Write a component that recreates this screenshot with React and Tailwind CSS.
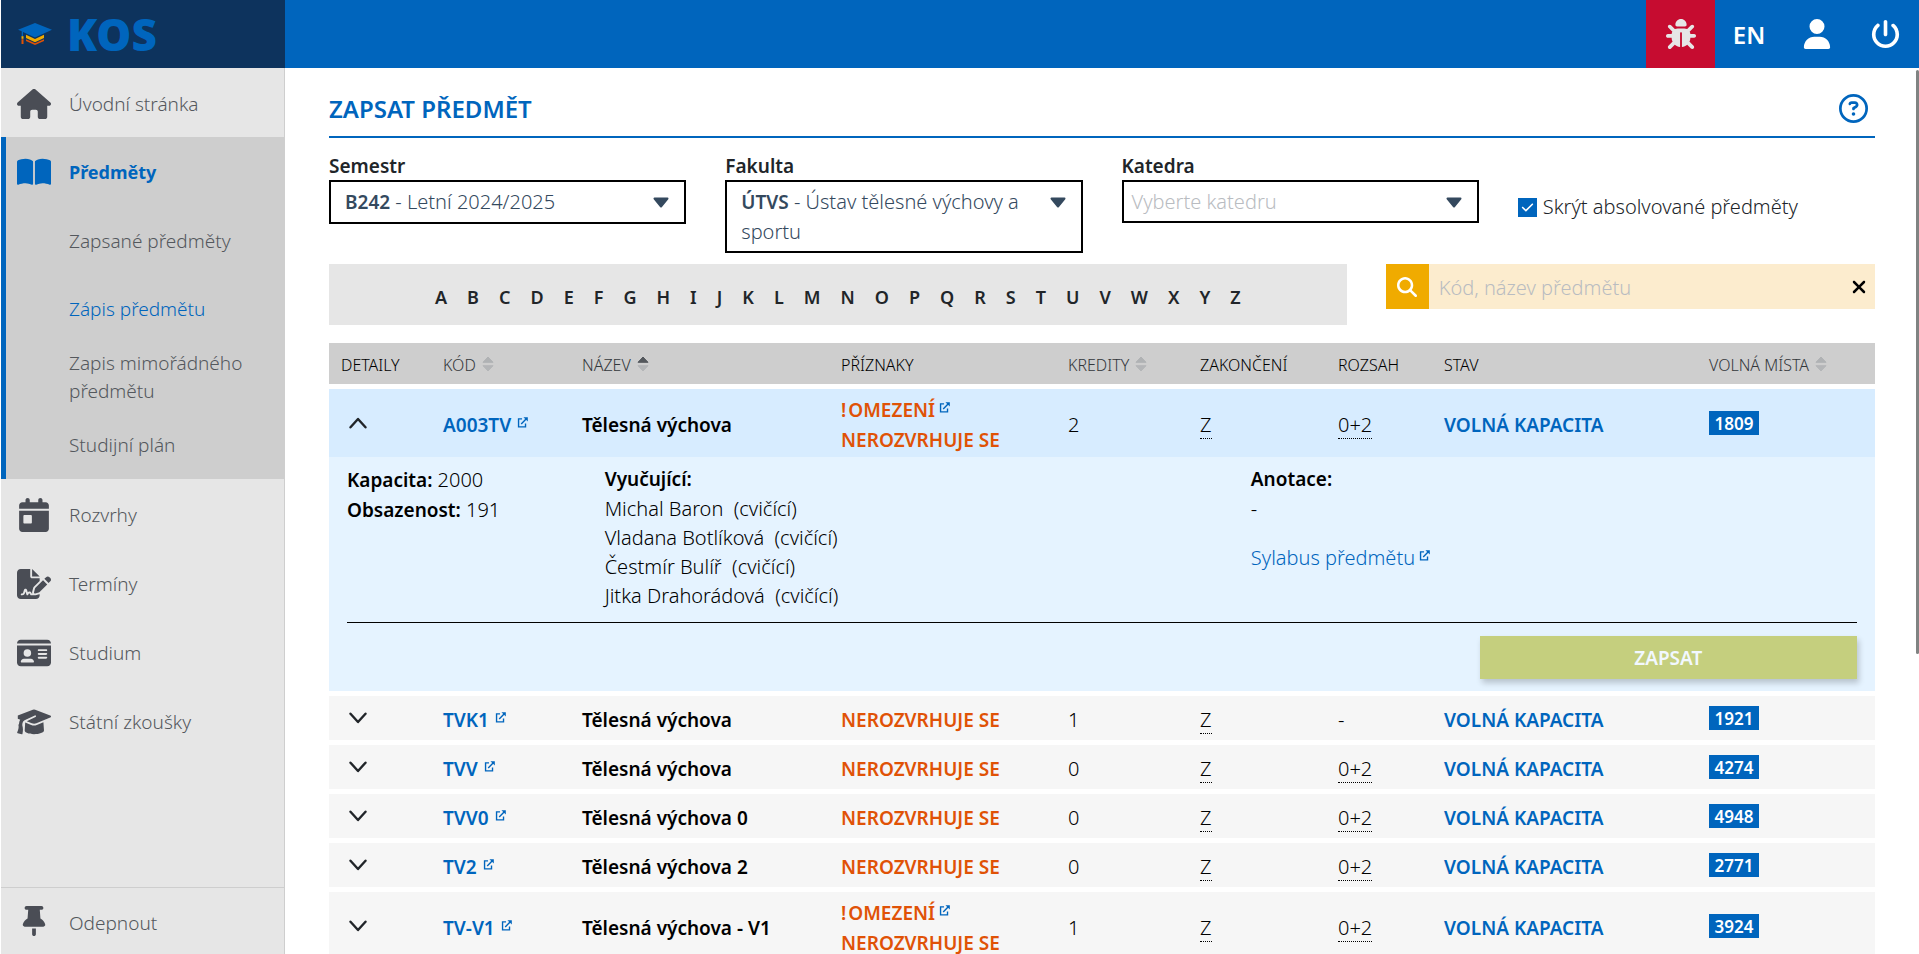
import { Fragment, useState } from "react";
import {
  FaHouse,
  FaBookOpen,
  FaCalendarDay,
  FaFileSignature,
  FaIdCard,
  FaThumbtack,
  FaBug,
  FaUser,
  FaPowerOff,
  FaRegCircleQuestion,
  FaXmark,
  FaMagnifyingGlass,
  FaCheck,
} from "react-icons/fa6";

function GraduationIcon({ className }) {
  return (
    <svg viewBox="0 0 34 25" className={className} aria-hidden="true">
      <path
        d="M15.8.3a3.6 3.6 0 0 1 2.4 0L33.2 6c1.1.4 1.1 1.7 0 2.1l-13.8 5.6a6 6 0 0 1-4.6 0l-5-2 8.700-4.300a.8.8 0 1 0-.7-1.500L7.600 10.700a4 4 0 0 0-2 2.500c-.3 1-.4 2-.2 3 .7 2 .7 5 .1 8 0 .4-.4.7-.8.6L.700 23.700c-.4-.1-.6-.5-.5-.9.9-1.900 1.600-4.300 1.400-6.300a1.900 1.900 0 0 1 .4-2c.2-1.700.5-3.200 1.300-4.200L.800 9.200V6z"
        fill="currentColor"
      />
      <path
        d="M8.200 12.900l6 2.500a7 7 0 0 0 5.600 0l6.600-2.700.6 8.300c0 1.900-4.600 3.700-10 3.700s-9.300-1.800-9.300-3.700z"
        fill="currentColor"
      />
    </svg>
  );
}

function LogoIcon({ className }) {
  return (
    <svg viewBox="0 0 34 22" className={className} aria-hidden="true">
      <path d="M17 0 34 6.700 17 14.500 5 9v4.500H3.700V8.300L0 6.700z" fill="#0065bd" />
      <path d="M8 11.800v3.300l9 4.200 9-4.200v-3.300l-9 4.200z" fill="#f0ab00" />
      <path d="M8 16.200v1.900l9 3.900 9-3.900v-1.900l-9 4.100z" fill="#e05206" />
      <path d="M3.500 13.200h2v2.600h-2z" fill="#f0ab00" />
      <path d="M3.500 16.200h2V21h-2z" fill="#e05206" />
    </svg>
  );
}

function ExternalIcon({ gap = "ml-1" }) {
  return (
    <svg viewBox="0 0 12 12" className={"inline-block size-[11px] -translate-y-1 align-baseline text-[#0065bd] " + gap} fill="none" stroke="currentColor" strokeWidth="1.500" aria-hidden="true">
      <path d="M5.500 2H1.700v8.800h7.600V7M4.600 7.700 10.400 1.600" />
      <path d="M7 .2h4.800v4.700z" fill="currentColor" stroke="none" />
    </svg>
  );
}

function SortIcon({ up }) {
  return (
    <svg viewBox="0 0 12 16" className="ml-1.5 inline-block h-4 w-3 -translate-y-0.5" aria-hidden="true">
      <path d="M6 1 11 6.300H1z" fill={up ? "#54585d" : "#b0b2b4"} stroke={up ? "#54585d" : "#b0b2b4"} strokeLinejoin="round" />
      <path d="M6 15 1 9.700h10z" fill="#b4b6b8" stroke="#b4b6b8" strokeLinejoin="round" />
    </svg>
  );
}

function Chevron({ open }) {
  return (
    <svg viewBox="0 0 18 12" className="h-3 w-[18px]" fill="none" stroke="#212529" strokeWidth="2.400" strokeLinecap="round" strokeLinejoin="round" aria-hidden="true">
      <path d={open ? "M1.500 10.300 9 2l7.500 8.300" : "M1.500 1.700 9 10l7.500-8.300"} />
    </svg>
  );
}

const mainItem = "flex h-[69px] items-center gap-[18px] pt-0.5 pl-4 text-[19px]";
const subItem = "flex h-[68px] items-center pt-0.5 pl-[63px] pr-6 text-[19px] leading-7";

function NavItem({ icon: Icon, children }) {
  return (
    <a href="#" className={mainItem}>
      <span className="flex w-[34px] justify-center text-[#4a4d55]">
        <Icon className="size-[34px]" />
      </span>
      <span className="pt-0.5 text-[#54585d]">{children}</span>
    </a>
  );
}

function Sidebar() {
  return (
    <nav className="flex w-[284px] shrink-0 flex-col border-r border-[#cecece] bg-[#e6e6e6] font-light">
      <NavItem icon={FaHouse}>Úvodní stránka</NavItem>
      <div className="border-l-[5px] border-[#0065bd] bg-[#cecece] pb-px text-[#54585d]">
        <a href="#" className="flex h-[69px] items-center gap-[18px] pl-[11px] text-[18px] font-bold text-[#0065bd]">
          <FaBookOpen className="size-[34px]" />
          <span className="pt-0.5">Předměty</span>
        </a>
        <a href="#" className={subItem}>Zapsané předměty</a>
        <a href="#" className={subItem + " text-[#0065bd]"}>Zápis předmětu</a>
        <a href="#" className={subItem}>Zapis mimořádného předmětu</a>
        <a href="#" className={subItem}>Studijní plán</a>
      </div>
      <NavItem icon={FaCalendarDay}>Rozvrhy</NavItem>
      <NavItem icon={FaFileSignature}>Termíny</NavItem>
      <NavItem icon={FaIdCard}>Studium</NavItem>
      <NavItem icon={GraduationIcon}>Státní zkoušky</NavItem>
      <button type="button" className="mt-auto flex h-[67px] items-center gap-[18px] border-t border-[#cecece] pl-4 text-[19px] text-[#54585d]">
        <span className="flex w-[34px] justify-center text-[#4a4d55]">
          <FaThumbtack className="size-[30px]" />
        </span>
        <span className="pt-1">Odepnout</span>
      </button>
    </nav>
  );
}

function Select({ id, label, options, children }) {
  return (
    <div className="col-span-3">
      <label htmlFor={id} className="block text-[19px] leading-7 font-semibold text-[#212529]">{label}</label>
      <div className="relative flex items-start justify-between gap-4 border-2 border-black bg-white py-[5px] pr-[15px] text-xl leading-[29px] font-light text-[#34495e]">
        {children}
        <svg viewBox="0 0 16 11" className="mt-[10px] h-[11px] w-4 shrink-0" aria-hidden="true">
          <path d="M1.500 1.500h13L8 9.500z" fill="#34495e" stroke="#34495e" strokeWidth="2" strokeLinejoin="round" />
        </svg>
        <select id={id} className="absolute inset-0 h-full w-full cursor-pointer opacity-0">
          {options.map((o) => (
            <option key={o}>{o}</option>
          ))}
        </select>
      </div>
    </div>
  );
}

const columns = [
  { label: "DETAILY", width: "w-[102px]" },
  { label: "KÓD", width: "w-[139px]", sort: true },
  { label: "NÁZEV", width: "w-[259px]", sort: true, up: true },
  { label: "PŘÍZNAKY", width: "w-[227px]" },
  { label: "KREDITY", width: "w-[132px]", sort: true },
  { label: "ZAKONČENÍ", width: "w-[138px]" },
  { label: "ROZSAH", width: "w-[106px]" },
  { label: "STAV", width: "w-[265px]" },
  { label: "VOLNÁ MÍSTA", width: "w-[178px]", sort: true },
];

const courses = [
  { code: "A003TV", name: "Tělesná výchova", limited: true, credits: 2, range: "0+2", free: 1809 },
  { code: "TVK1", name: "Tělesná výchova", credits: 1, range: "-", free: 1921 },
  { code: "TVV", name: "Tělesná výchova", credits: 0, range: "0+2", free: 4274 },
  { code: "TVV0", name: "Tělesná výchova 0", credits: 0, range: "0+2", free: 4948 },
  { code: "TV2", name: "Tělesná výchova 2", credits: 0, range: "0+2", free: 2771 },
  { code: "TV-V1", name: "Tělesná výchova - V1", limited: true, credits: 1, range: "0+2", free: 3924 },
];

const teachers = ["Michal Baron", "Vladana Botlíková", "Čestmír Bulíř", "Jitka Drahorádová"];

function Details() {
  return (
    <div className="px-[18px] pt-2 pb-3 text-xl leading-[29px]">
      <div className="grid grid-cols-12 border-b border-black pb-3">
        <div className="col-span-2">
          <p><b className="text-[19px] font-semibold">Kapacita:</b> 2000</p>
          <p><b className="text-[19px] font-semibold">Obsazenost:</b> 191</p>
        </div>
        <div className="col-span-5 pl-1.5">
          <p className="text-[19px] font-semibold">Vyučující:</p>
          <ul>
            {teachers.map((t) => (
              <li key={t}>{t}&nbsp; (cvičící)</li>
            ))}
          </ul>
        </div>
        <div className="col-span-5 pl-[23px]">
          <p className="text-[19px] font-semibold">Anotace:</p>
          <p>-</p>
          <p className="mt-5">
            <a href="#" className="text-[#0065bd]">Sylabus předmětu<ExternalIcon /></a>
          </p>
        </div>
      </div>
      <div className="flex justify-end pt-[13px]">
        <button type="button" className="h-[43px] w-1/4 bg-[#c5cf7e] pt-0.5 text-[19px] font-semibold text-[#f2f8ff] shadow-[2px_4px_6px_rgba(0,0,0,0.2)]">
          ZAPSAT
        </button>
      </div>
    </div>
  );
}

function CourseTable() {
  const [open, setOpen] = useState("A003TV");
  return (
    <table className="mt-[18px] w-full table-fixed border-separate border-spacing-0 text-xl font-light text-black">
      <thead>
        <tr className="h-[41px] bg-[#cecece] text-base">
          {columns.map((c) => (
            <th key={c.label} scope="col" className={"px-3 pt-0.5 text-left font-light whitespace-nowrap " + c.width}>
              {c.sort ? (
                <button type="button" className="text-[#33373b]">
                  {c.label}
                  <SortIcon up={c.up} />
                </button>
              ) : (
                c.label
              )}
            </th>
          ))}
        </tr>
      </thead>
      <tbody>
        {courses.map((c) => {
          const isOpen = open === c.code;
          const cell = "border-t-[5px] border-white pt-1.5 pb-0.5 pl-3 leading-[30px] whitespace-nowrap";
          return (
            <Fragment key={c.code}>
              <tr className={isOpen ? "h-[49px] bg-[#d7ecff]" : "h-[49px] bg-[#f6f6f6]"}>
                <td className="border-t-[5px] border-white py-1 pl-5">
                  <button type="button" aria-label="Detaily" aria-expanded={isOpen} onClick={() => setOpen(isOpen ? null : c.code)} className="flex">
                    <Chevron open={isOpen} />
                  </button>
                </td>
                <td className={cell}>
                  <a href="#" className="text-[19px] font-semibold text-[#0065bd]">{c.code}<ExternalIcon gap="ml-1.5" /></a>
                </td>
                <td className={cell + " text-[19px] font-semibold"}>{c.name}</td>
                <td className={cell + " text-[19px] font-semibold text-[#e05206]"}>
                  {c.limited && (
                    <a href="#" className="block">
                      <span className="mr-0.5">!</span>OMEZENÍ<ExternalIcon />
                    </a>
                  )}
                  NEROZVRHUJE SE
                </td>
                <td className={cell}>{c.credits}</td>
                <td className={cell}>
                  <span className="border-b border-dotted border-black">Z</span>
                </td>
                <td className={cell}>
                  {c.range === "-" ? "-" : <span className="border-b border-dotted border-black">{c.range}</span>}
                </td>
                <td className={cell + " text-[19px] font-semibold text-[#0065bd]"}>VOLNÁ KAPACITA</td>
                <td className="border-t-[5px] border-white py-1 pl-3">
                  <span className="flex h-6 w-[50px] items-center justify-center bg-[#0065bd] pt-0.5 text-[17px] font-semibold text-white">
                    {c.free}
                  </span>
                </td>
              </tr>
              {isOpen && (
                <tr className="bg-[#e5f3ff]">
                  <td colSpan={9} className="p-0">
                    <Details />
                  </td>
                </tr>
              )}
            </Fragment>
          );
        })}
      </tbody>
    </table>
  );
}

export default function App() {
  return (
    <div className="flex h-screen flex-col overflow-hidden bg-white pl-px font-['Noto_Sans',sans-serif]">
      <header className="flex h-[68px] shrink-0 bg-[#0065bd] text-white">
        <a href="#" className="flex w-[284px] items-center bg-[#0d335d] pl-[17px]" aria-label="KOS">
          <LogoIcon className="h-[22px] w-[34px]" />
          <span className="pl-[15px] text-[44px] leading-none font-black text-[#0065bd]">KOS</span>
        </a>
        <div className="ml-auto flex">
          <button type="button" aria-label="Nahlásit chybu" className="flex w-[69px] items-center justify-center bg-[#c60c30] text-[#e6e6e6]">
            <FaBug className="size-[30px]" />
          </button>
          <button type="button" className="w-[68px] pt-0.5 text-2xl font-semibold">EN</button>
          <button type="button" aria-label="Uživatel" className="flex w-[68px] items-center justify-center">
            <FaUser className="size-[30px]" />
          </button>
          <button type="button" aria-label="Odhlásit" className="flex w-[68px] items-center justify-center">
            <FaPowerOff className="size-[29px]" />
          </button>
        </div>
      </header>
      <div className="flex min-h-0 flex-1">
        <Sidebar />
        <main className="relative min-w-0 flex-1 overflow-hidden pt-3 pr-11 pl-11">
          <div className="flex h-[58px] items-center justify-between border-b-2 border-[#0065bd] pr-[7px] text-[#0065bd]">
            <h1 className="pt-0.5 text-2xl font-semibold">ZAPSAT PŘEDMĚT</h1>
            <button type="button" aria-label="Nápověda">
              <FaRegCircleQuestion className="size-[29px]" />
            </button>
          </div>
          <form className="mt-3.5 grid grid-cols-12 items-start gap-x-[39px]">
            <Select id="semestr" label="Semestr" options={["B242 - Letní 2024/2025"]}>
              <span className="pl-3.5"><b className="text-[19px] font-semibold">B242</b> - Letní 2024/2025</span>
            </Select>
            <Select id="fakulta" label="Fakulta" options={["ÚTVS - Ústav tělesné výchovy a sportu"]}>
              <span className="pl-3.5"><b className="text-[19px] font-semibold">ÚTVS</b> - Ústav tělesné výchovy a sportu</span>
            </Select>
            <Select id="katedra" label="Katedra" options={["Vyberte katedru"]}>
              <span className="pl-2 text-[#b9bcc1]">Vyberte katedru</span>
            </Select>
            <label className="col-span-3 mt-10 flex items-center gap-1.5 text-xl leading-[30px] font-light text-[#212529]">
              <span className="grid place-items-center">
                <input type="checkbox" defaultChecked className="peer size-[19px] appearance-none border-2 border-[#0065bd] [grid-area:1/1] checked:bg-[#0065bd]" />
                <FaCheck className="pointer-events-none hidden size-[13px] text-white [grid-area:1/1] peer-checked:block" />
              </span>
              Skrýt absolvované předměty
            </label>
          </form>
          <div className="mt-[11px] grid grid-cols-12 items-start gap-x-[39px]">
            <div className="col-span-8 flex h-[61px] items-center justify-center gap-5 bg-[#e6e6e6] pt-1 text-lg font-semibold text-[#212529]">
              {"ABCDEFGHIJKLMNOPQRSTUVWXYZ".split("").map((l) => (
                <button key={l} type="button">{l}</button>
              ))}
            </div>
            <div className="col-span-4 flex h-[45px] items-center bg-[#fcecce]">
              <button type="button" aria-label="Hledat" className="flex h-full w-[43px] shrink-0 items-center justify-center bg-[#f0ab00] text-white">
                <FaMagnifyingGlass className="size-5" />
              </button>
              <input type="text" aria-label="Kód, název předmětu" placeholder="Kód, název předmětu" className="h-full min-w-0 flex-1 bg-transparent pt-0.5 pl-2.5 text-xl font-light text-[#212529] outline-none placeholder:text-[#b9bcc1]" />
              <button type="button" aria-label="Vymazat" className="pr-1.5 text-black">
                <FaXmark className="size-5" />
              </button>
            </div>
          </div>
          <CourseTable />
          <div className="absolute top-0.5 right-0 h-[584px] w-[3px] rounded-full bg-[#808382]" />
        </main>
      </div>
    </div>
  );
}
